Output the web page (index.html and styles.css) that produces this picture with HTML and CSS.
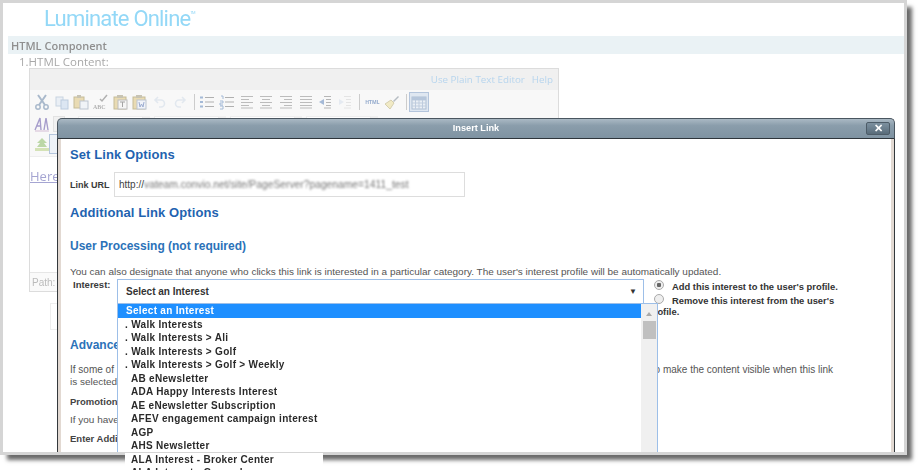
FILE: index.html
```html
<!DOCTYPE html>
<html lang="en">
<head>
    <meta charset="UTF-8">
    <title>Insert Link</title>
    <link rel="stylesheet" href="styles.css">
</head>
<body>
    <div class="stage">
        <div class="shot">
            <div class="logo">Luminate Online<sup>TM</sup></div>
            <div class="band">HTML Component</div>
            <div class="field-label">1.HTML Content:</div>
            <div class="editor">
                <div class="editor-links"><a>Use Plain Text Editor</a><a>Help</a></div>
                <div class="toolbar">
                    <div class="tool-row">
                        <svg class="ico" viewBox="0 0 16 16"><path d="M4 1l7 10M12 1L5 11" stroke="#8fa4bd" stroke-width="2" fill="none"/><circle cx="4" cy="13" r="2.2" stroke="#8fa4bd" stroke-width="1.5" fill="none"/><circle cx="12" cy="13" r="2.2" stroke="#8fa4bd" stroke-width="1.5" fill="none"/></svg>
                        <svg class="ico" viewBox="0 0 16 16"><rect x="2" y="3" width="7" height="9" fill="#e6edf5" stroke="#b8c8da"/><rect x="7" y="6" width="7" height="9" fill="#d3e1f1" stroke="#a9bdd6"/></svg>
                        <svg class="ico" viewBox="0 0 16 16"><rect x="1" y="3" width="10" height="11" fill="#e4d29c" stroke="#b5a878"/><rect x="4" y="1" width="4" height="3" fill="#b9b39c"/><rect x="7" y="7" width="8" height="8" fill="#eef2f7" stroke="#a9b4c4"/></svg>
                        <svg class="ico" viewBox="0 0 16 16"><path d="M7 5l2 2 5-6" stroke="#9a9a9a" stroke-width="1.5" fill="none"/><text x="0" y="15" class="abc">ABC</text></svg>
                        <svg class="ico" viewBox="0 0 16 16"><rect x="1" y="3" width="12" height="12" fill="#e4d29c" stroke="#b5a878"/><rect x="4" y="1" width="6" height="3" fill="#b9b39c"/><rect x="5" y="6" width="9" height="9" fill="#f4f4f4" stroke="#aaa"/><path d="M7 8h5M9.500 8v5" stroke="#888" fill="none"/></svg>
                        <svg class="ico" viewBox="0 0 16 16"><rect x="1" y="3" width="12" height="12" fill="#e4d29c" stroke="#b5a878"/><rect x="4" y="1" width="6" height="3" fill="#b9b39c"/><rect x="5" y="6" width="9" height="9" fill="#eef2fa" stroke="#a9b4c4"/><path d="M7 8l1 5 1.500-3 1.500 3 1-5" stroke="#7d93c4" fill="none"/></svg>
                        <svg class="ico" viewBox="0 0 16 16"><path d="M6 3L3 6l3 3M3 6h6a3.500 3.500 0 010 7H7" stroke="#dbe3ec" stroke-width="1.600" fill="none"/></svg>
                        <svg class="ico" viewBox="0 0 16 16"><path d="M10 3l3 3-3 3M13 6H7a3.500 3.500 0 000 7h2" stroke="#dbe3ec" stroke-width="1.600" fill="none"/></svg>
                        <span class="tool-sep"></span>
                        <svg class="ico" viewBox="0 0 16 16"><path d="M6 3.500h9M6 8h9M6 12.500h9" stroke="#999" fill="none"/><path d="M1 3.500h3M1 8h3M1 12.500h3" stroke="#8aa6cc" stroke-width="2" fill="none"/></svg>
                        <svg class="ico" viewBox="0 0 16 16"><path d="M6 3.500h9M6 8h9M6 12.500h9" stroke="#999" fill="none"/><path d="M2 2h2v3M1 7h3v2H1v2h3M1 12h3v3H1" stroke="#8aa6cc" fill="none"/></svg>
                        <svg class="ico" viewBox="0 0 16 16"><path d="M2 2.500h12M2 5.500h8M2 8.500h12M2 11.500h8M2 14h12" stroke="#a8a8a8" fill="none"/></svg>
                        <svg class="ico" viewBox="0 0 16 16"><path d="M2 2.500h12M4 5.500h8M2 8.500h12M4 11.500h8M2 14h12" stroke="#a8a8a8" fill="none"/></svg>
                        <svg class="ico" viewBox="0 0 16 16"><path d="M2 2.500h12M6 5.500h8M2 8.500h12M6 11.500h8M2 14h12" stroke="#a8a8a8" fill="none"/></svg>
                        <svg class="ico" viewBox="0 0 16 16"><path d="M2 2.500h12M2 5.500h12M2 8.500h12M2 11.500h12M2 14h12" stroke="#a8a8a8" fill="none"/></svg>
                        <svg class="ico" viewBox="0 0 16 16"><path d="M7 2.500h7M9 5.500h5M9 8.500h5M9 11.500h5M7 14h7" stroke="#a0a0a0" fill="none"/><path d="M7 5v6L2 8z" fill="#8aa6cc"/></svg>
                        <svg class="ico" viewBox="0 0 16 16"><path d="M7 2.500h7M9 5.500h5M9 8.500h5M9 11.500h5M7 14h7" stroke="#dedede" fill="none"/><path d="M2 5v6l5-3z" fill="#dfe6ef"/></svg>
                        <span class="tool-sep"></span>
                        <span class="html-ico">HTML</span>
                        <svg class="ico" viewBox="0 0 16 16"><path d="M1 10l6-4 3 3-4 6z" fill="#efe6b5" stroke="#c9c096"/><path d="M9 7l5-5 1 1-5 5z" fill="#9fa8b2"/></svg>
                        <span class="tool-sep"></span>
                        <span class="tool-on"><svg class="ico" viewBox="0 0 16 16"><rect x="1" y="2" width="14" height="12" fill="#eef2f7" stroke="#9eb1c9"/><path d="M1 5h14M1 8h14M1 11h14M4.500 5v9M8 5v9M11.500 5v9" stroke="#b5c4d8" fill="none"/><rect x="1" y="2" width="14" height="3" fill="#a9bcd4"/></svg></span>
                    </div>
                    <div class="tool-row tool-row2">
                        <svg class="ico" viewBox="0 0 16 16"><path d="M1 14L6 2l1 12M10 14l2-12 2 12M3 10h4" stroke="#8b7fbd" stroke-width="1.400" fill="none"/><path d="M1 15h14" stroke="#c9a7c9" fill="none"/></svg>
                        <span class="tool-box"></span>
                        <span class="combo first-combo"></span><span class="combo"></span><span class="combo"></span><span class="combo"></span>
                    </div>
                    <div class="tool-row">
                        <svg class="ico" viewBox="0 0 16 16"><rect x="1" y="12" width="14" height="3" fill="#c8dba0"/><path d="M8 2l5 5h-3l3 4H3l3-4H3z" fill="#a8cc8c"/></svg>
                        <span class="tool-box tall"></span>
                    </div>
                </div>
                <div class="editor-body"><a>Here</a></div>
                <div class="editor-path">Path:</div>
            </div>
            <div class="ghost-box"></div>
        </div>

        <div class="modal">
            <div class="modal-title">Insert Link
                <span class="modal-close">&#10005;</span>
            </div>
            <div class="modal-body">
                <h3 class="first">Set Link Options</h3>
                <div class="url-row">
                    <label>Link URL</label>
                    <div class="url-box">http://<span class="blurred">vateam.convio.net/site/PageServer?pagename=1411_test</span></div>
                </div>
                <h3 class="add-opts">Additional Link Options</h3>
                <h4>User Processing (not required)</h4>
                <p class="note">You can also designate that anyone who clicks this link is interested in a particular category. The user's interest profile will be automatically updated.</p>
                <div class="interest-row">
                    <label>Interest:</label>
                    <div class="select-box">Select an Interest<span class="caret">&#9660;</span></div>
                    <div class="radios">
                        <div class="radio-line"><span class="radio on"></span>Add this interest to the user's profile.</div>
                        <div class="radio-line"><span class="radio"></span>Remove this interest from the user's</div>
                        <div class="radio-wrap">profile.</div>
                    </div>
                </div>
                <h4 class="advanced">Advanced</h4>
                <div class="split"><span>If some of</span><span>to make the content visible when this link</span></div>
                <p class="note tight">is selected</p>
                <p class="note bold promo">Promotion</p>
                <p class="note have">If you have</p>
                <p class="note bold enter">Enter Addi</p>

                <div class="dropdown">
                    <div class="dd-item selected">Select an Interest</div>
                    <div class="dd-item dot">. Walk Interests</div>
                    <div class="dd-item dot">. Walk Interests &gt; Ali</div>
                    <div class="dd-item dot">. Walk Interests &gt; Golf</div>
                    <div class="dd-item dot">. Walk Interests &gt; Golf &gt; Weekly</div>
                    <div class="dd-item">AB eNewsletter</div>
                    <div class="dd-item">ADA Happy Interests Interest</div>
                    <div class="dd-item">AE eNewsletter Subscription</div>
                    <div class="dd-item">AFEV engagement campaign interest</div>
                    <div class="dd-item">AGP</div>
                    <div class="dd-item">AHS Newsletter</div>
                    <div class="dd-item spill">ALA Interest - Broker Center</div>
                    <div class="dd-item spill">ALA Interest - General</div>
                    <div class="dd-scroll">
                        <span class="dd-up"></span>
                        <span class="dd-thumb"></span>
                    </div>
                </div>
            </div>
        </div>
    </div>
</body>
</html>
```

FILE: styles.css
```css
* {
    box-sizing: border-box;
}
body {
    margin: 0;
    background: #fff;
}
.stage {
    position: relative;
    width: 921px;
    height: 470px;
    overflow: hidden;
    font-family: "Liberation Sans", Arial, sans-serif;
    filter: blur(0.4px);
}
.shot {
    position: relative;
    width: 907px;
    height: 455px;
    background: #fff;
    border: 3px solid #d5d5d5;
    box-shadow: 6px 6px 4px -1px #6a6a6a;
    padding: 0 0 0 5px;
    font-family: "Open Sans", sans-serif;
}

/* page behind the dialog */
.logo {
    height: 33px;
    padding: 3px 0 0 36px;
    font-family: Roboto, sans-serif;
    font-weight: 400;
    font-size: 22px;
    letter-spacing: -0.8px;
    line-height: 26px;
    color: #93d8f7;
}
.logo sup {
    font-size: 4px;
    line-height: 0;
    vertical-align: 12px;
}
.band {
    height: 18px;
    background: #eaf2f5;
    padding-left: 3px;
    font-size: 11px;
    font-weight: 600;
    line-height: 19px;
    color: #8f8f8f;
}
.field-label {
    height: 14px;
    padding-left: 11px;
    font-size: 11.500px;
    line-height: 15px;
    color: #a8a8a8;
}
.editor {
    width: 530px;
    height: 224px;
    margin: 0 0 0 21px;
    border: 1px solid #dcdcdc;
    display: flex;
    flex-direction: column;
}
.editor-links {
    height: 21px;
    background: #f0f0f0;
    display: flex;
    justify-content: flex-end;
    gap: 7px;
    padding-right: 5px;
    font-size: 9.800px;
    line-height: 21px;
    color: #b7d5ee;
}
.toolbar {
    height: 67px;
    background: #f8f8f8;
    border-bottom: 1px solid #eee;
    padding: 2px 0 0 4px;
}
.tool-row {
    display: flex;
    align-items: center;
    gap: 3.7px;
    height: 20px;
}
.tool-row2 {
    margin-top: 2px;
    gap: 3px;
}
.ico {
    width: 16px;
    height: 16px;
    flex: none;
    opacity: 0.75;
}
.abc {
    font: bold 6px "Liberation Serif", serif;
    fill: #9a9a9a;
}
.tool-sep {
    width: 1px;
    height: 16px;
    background: #ccc;
    margin: 0 1px 0 2px;
}
.html-ico {
    width: 16px;
    font-size: 5px;
    font-weight: 700;
    color: #92a9cc;
    text-align: center;
}
.tool-on {
    width: 20px;
    height: 20px;
    background: #dfe7f1;
    border: 1px solid #b4c5dc;
    padding: 1px;
    margin-left: -2px;
}
.tool-box {
    width: 12px;
    height: 16px;
    background: #f1f1f1;
    border: 1px solid #e2e2e2;
}
.tool-box.tall {
    height: 20px;
    width: 14px;
    margin-left: -5px;
    background: #eef2f7;
    border-color: #b4c5dc;
}
.combo {
    width: 65px;
    height: 16px;
    background: #fff;
    border: 1px solid #eee;
    margin-right: 8px;
    box-shadow: 7px 0 #f0f0f0;
}
.first-combo {
    margin-left: 10px;
}
.editor-body {
    flex: 1;
    padding: 11px 0 0 0;
    font-size: 13px;
    line-height: 16px;
    color: #a5a5d2;
}
.editor-body a {
    text-decoration: underline;
}
.editor-path {
    height: 19px;
    background: #fafafa;
    border-top: 1px solid #e6e6e6;
    padding-left: 2px;
    font-family: "Liberation Sans", sans-serif;
    font-size: 10px;
    line-height: 19px;
    color: #bbb;
}
.ghost-box {
    width: 8px;
    height: 27px;
    margin: 11px 0 0 42px;
    border: 1px solid #eee;
    border-right: 0;
}

/* dialog */
.modal {
    position: absolute;
    left: 57px;
    top: 118px;
    width: 838px;
    height: 334px;
    display: flex;
    flex-direction: column;
}
.modal-title {
    position: relative;
    height: 21px;
    background: linear-gradient(#aab9c4, #8a9dab 35%, #7f93a2);
    border: 1px solid #4a5660;
    border-bottom: 1px solid #2e353b;
    border-radius: 5px 5px 0 0;
    text-align: center;
    font-size: 9.200px;
    font-weight: 700;
    line-height: 18px;
    color: #fff;
}
.modal-close {
    position: absolute;
    right: 4px;
    top: 3px;
    width: 24px;
    height: 13px;
    background: linear-gradient(#7c909f, #6b7f8e 50%, #586b79);
    border: 1px solid #4d5c68;
    border-radius: 2px;
    font-size: 11px;
    line-height: 11px;
}
.modal-body {
    position: relative;
    flex: 1;
    background: #fff;
    border-left: 1px solid #33383c;
    border-right: 1px solid #33383c;
    box-shadow: inset 3px 0 0 #e2d9d2, inset -3px 0 0 #e2d9d2;
    padding: 0 0 0 12px;
    font-size: 10px;
    color: #555;
}
h3, h4 {
    margin: 0;
    font-size: 13px;
    font-weight: 700;
    line-height: 16px;
    color: #1f63b0;
}
h3 {
    letter-spacing: 0.1px;
}
h4 {
    font-size: 12px;
    color: #2b72b9;
}
h3.first {
    margin-top: 8px;
}
.url-row {
    display: flex;
    align-items: center;
    margin-top: 9px;
    height: 25px;
}
.url-row label {
    width: 44px;
    font-size: 9px;
    font-weight: 700;
    color: #3a3a3a;
}
.url-box {
    width: 351px;
    height: 25px;
    border: 1px solid #ddd;
    padding-left: 4px;
    font-size: 10px;
    line-height: 23px;
    color: #444;
}
.blurred {
    filter: blur(1.3px);
    display: inline-block;
    font-size: 10.300px;
    color: #777;
}
.add-opts {
    margin-top: 8px;
}
h4 {
    margin-top: 17px;
}
.note {
    margin: 0;
    font-size: 9.970px;
    line-height: 12px;
}
h4 + .note {
    margin-top: 12px;
}
.interest-row {
    display: flex;
    height: 24px;
    margin-top: 1px;
}
.interest-row label {
    width: 47px;
    padding-left: 3px;
    font-size: 9.500px;
    font-weight: 700;
    line-height: 11px;
    color: #3a3a3a;
}
.select-box {
    position: relative;
    width: 527px;
    height: 25px;
    border: 1px solid #9dbfe8;
    padding-left: 8px;
    font-size: 10px;
    font-weight: 700;
    line-height: 23px;
    color: #333;
}
.caret {
    position: absolute;
    right: 6px;
    top: 0;
    font-size: 8px;
}
.radios {
    position: relative;
    width: 190px;
    margin-left: 10px;
    font-size: 9.400px;
    font-weight: 700;
    color: #333;
}
.radio-line {
    display: flex;
    align-items: center;
    gap: 8px;
    height: 14px;
}
.radio-wrap {
    height: 11px;
    margin-left: -6px;
    margin-top: -1px;
    line-height: 11px;
}
.radio {
    width: 10px;
    height: 10px;
    margin-top: -3px;
    border: 1px solid #aaa;
    border-radius: 50%;
    background: #eee;
    flex: none;
}
.radio.on {
    background: radial-gradient(#666 35%, #eee 45%);
}
h4.advanced {
    margin-top: 34px;
}
.split {
    display: flex;
    justify-content: space-between;
    width: 763px;
    margin-top: 11px;
    line-height: 12px;
}
.promo {
    margin-top: 8px;
}
.have {
    margin-top: 6px;
}
.enter {
    margin-top: 7px;
}
.bold {
    font-weight: 700;
    color: #444;
    font-size: 9.500px;
}

/* the open list spills past the bottom of the screenshot */
.dropdown {
    position: absolute;
    left: 59px;
    top: 164px;
    width: 541px;
    height: 149px;
    background: #fff;
    border: 1px solid #9dbfe8;
    border-bottom: 0;
    font-size: 10px;
    font-weight: 700;
    letter-spacing: 0.3px;
    color: #2a2a2a;
}
.dd-item {
    height: 13.500px;
    padding-left: 13px;
    line-height: 13px;
}
.dd-item.dot {
    padding-left: 7px;
}
.dd-item.selected {
    width: 524px;
    padding-left: 8px;
    background: #1e8fff;
    color: #fff;
}
.dd-item.spill {
    width: 198px;
    margin-left: 7px;
    padding-left: 6px;
    background: #fff;
}
.dd-scroll {
    position: absolute;
    right: 0;
    top: 0;
    width: 16px;
    height: 148px;
    background: #f0f0f0;
    display: flex;
    flex-direction: column;
    align-items: center;
}
.dd-up {
    width: 0;
    height: 0;
    margin-top: 8px;
    border: 3.500px solid transparent;
    border-top: 0;
    border-bottom: 4px solid #aaa;
}
.dd-thumb {
    width: 13px;
    height: 18px;
    margin-top: 5px;
    background: #c0c0c0;
}
```
